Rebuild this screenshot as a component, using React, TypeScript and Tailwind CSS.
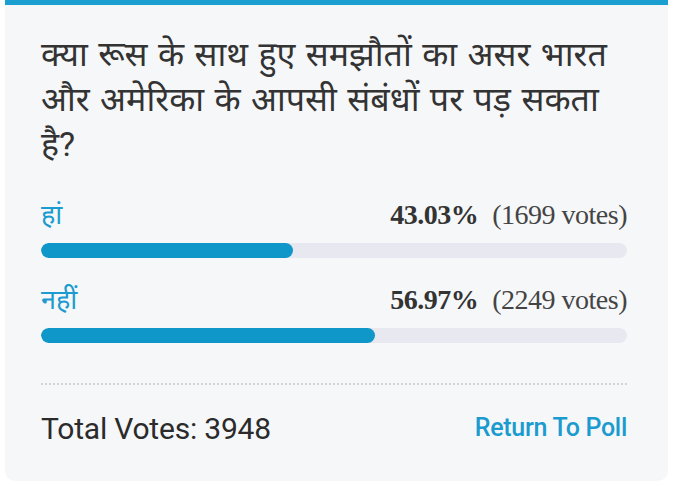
import React from 'react';

interface PollOption {
    label: string;
    percent: number;
    votes: number;
}

const options: PollOption[] = [
    { label: 'हां', percent: 43.03, votes: 1699 },
    { label: 'नहीं', percent: 56.97, votes: 2249 },
];

const OptionRow: React.FC<{ option: PollOption }> = ({ option }) => (
    <div className="flex flex-col">
        <div className="flex items-center justify-between h-[32px]">
            <span className="text-[27px] leading-[32px] text-[#1b9bcf]">{option.label}</span>
            <span className="text-[28px] leading-[32px] text-[#333] font-['Liberation_Serif',serif] tracking-[-0.5px]">
                <span className="font-semibold">{option.percent.toFixed(2)}%</span>
                <span className="ml-[14px] text-[#444]">({option.votes} votes)</span>
            </span>
        </div>
        <div className="mt-[12px] h-[15px] w-full rounded-full bg-[#e8e8f0] overflow-hidden">
            <div className="h-full rounded-full bg-[#0f97c9]" style={{ width: `${option.percent}%` }} />
        </div>
    </div>
);

export default function App() {
    return (
        <div className="w-[674px] h-[487px] bg-white font-['Roboto','Noto_Sans',sans-serif]">
            <div className="ml-[5px] w-[663px] h-[481px] bg-[#f6f7f9] rounded-b-[10px] border-t-[5px] border-[#1a9fd0] pl-[36px] pr-[41px] pt-[27px]">
                <h2 className="text-[34px] leading-[45px] text-[#333] font-normal [word-spacing:2px] whitespace-nowrap">
                    क्या रूस के साथ हुए समझौतों का असर भारत
                    <br />
                    और अमेरिका के आपसी संबंधों पर पड़ सकता
                    <br />
                    है?
                </h2>
                <div className="mt-[32px] flex flex-col gap-[26px]">
                    {options.map((o) => (
                        <OptionRow key={o.label} option={o} />
                    ))}
                </div>
                <div className="mt-[40px] border-t-2 border-dotted border-[#d4d4d8]" />
                <div className="mt-[25px] h-[36px] flex items-center justify-between">
                    <span className="text-[30px] text-[#2b2b2b] tracking-[-0.2px]">Total Votes: 3948</span>
                    <span className="text-[25px] font-medium text-[#1b9bcf] tracking-[-0.3px]">Return To Poll</span>
                </div>
            </div>
        </div>
    );
}
